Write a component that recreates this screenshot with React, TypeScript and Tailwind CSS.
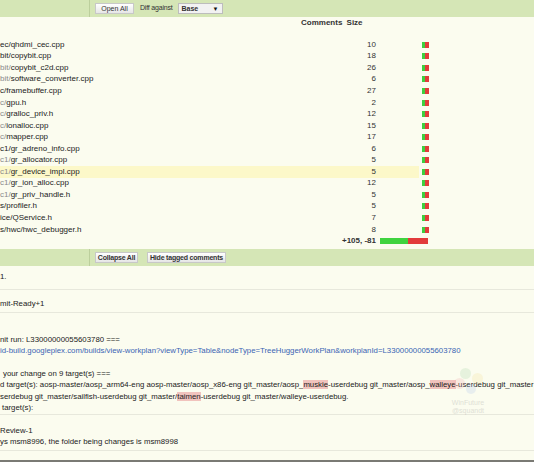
import React from "react";

interface FileRow {
  dim: string;
  name: string;
  count: number;
  highlight?: boolean;
}

const files: FileRow[] = [
  { dim: "", name: "ec/qhdmi_cec.cpp", count: 10 },
  { dim: "", name: "bit/copybit.cpp", count: 18 },
  { dim: "bit/", name: "copybit_c2d.cpp", count: 26 },
  { dim: "bit/", name: "software_converter.cpp", count: 6 },
  { dim: "", name: "c/framebuffer.cpp", count: 27 },
  { dim: "c/", name: "gpu.h", count: 2 },
  { dim: "c/", name: "gralloc_priv.h", count: 12 },
  { dim: "c/", name: "ionalloc.cpp", count: 15 },
  { dim: "c/", name: "mapper.cpp", count: 17 },
  { dim: "", name: "c1/gr_adreno_info.cpp", count: 6 },
  { dim: "c1/", name: "gr_allocator.cpp", count: 5 },
  { dim: "c1/", name: "gr_device_impl.cpp", count: 5, highlight: true },
  { dim: "c1/", name: "gr_ion_alloc.cpp", count: 12 },
  { dim: "c1/", name: "gr_priv_handle.h", count: 5 },
  { dim: "", name: "s/profiler.h", count: 5 },
  { dim: "", name: "ice/QService.h", count: 7 },
  { dim: "", name: "s/hwc/hwc_debugger.h", count: 8 },
];

function Btn({ children, w }: { children: React.ReactNode; w: string }) {
  return (
    <div
      className={`${w} h-[11px] flex items-center justify-center whitespace-nowrap bg-gradient-to-b from-white to-[#e6e6e6] border border-[#c8c8c8] text-[7px] text-[#333] leading-none`}
    >
      {children}
    </div>
  );
}

function Band({ children }: { children: React.ReactNode }) {
  return (
    <div className="h-[17px] bg-[#d5e6b6] flex items-center">
      <div className="w-[90px] h-full border-r border-[#bccf9c]" />
      <div className="flex items-center pl-[5px]">{children}</div>
    </div>
  );
}

function Mark({ children }: { children: React.ReactNode }) {
  return <span className="bg-[#f1c3bd]">{children}</span>;
}

export default function App() {
  return (
    <div
      className="relative w-[534px] h-[462px] overflow-hidden bg-[#fbfcef] text-[8px] text-[#222]"
      style={{ fontFamily: '"Liberation Sans", Arial, sans-serif' }}
    >
      <Band>
        <Btn w="w-[39px]">Open All</Btn>
        <span className="ml-[6px] text-[7px] text-[#333] tracking-[-0.2px]">Diff against</span>
        <div className="ml-[5px] w-[45px] h-[11px] bg-[#f2f2f2] border border-[#bdbdbd] flex items-center justify-between px-[3px] text-[7px] leading-none">
          <span className="font-bold text-[#333]">Base</span>
          <span className="text-[6px] text-[#111]">▼</span>
        </div>
      </Band>

      <div className="h-[22px] flex items-start pt-[1px]">
        <div className="ml-[301px] font-bold text-[#333] text-[8px] leading-[10px]">
          Comments <span className="ml-[2px]">Size</span>
        </div>
      </div>

      <div className="flex flex-col">
        {files.map((f, i) => (
          <div key={i} className="h-[11.56px] flex items-center">
            <div
              className={`w-[419px] h-full flex items-center pr-[43px] ${
                f.highlight ? "bg-[#fcf8c9]" : ""
              }`}
            >
              <div className="flex-1 whitespace-nowrap leading-none">
                {f.dim && <span className="text-[#8a8a8a]">{f.dim}</span>}
                <span>{f.name}</span>
              </div>
              <div className="text-right leading-none text-[#333]">{f.count}</div>
            </div>
            <div className="ml-[3px] flex h-[6px]">
              <div className="w-[3px] bg-[#3fcf3f]" />
              <div className="w-[4px] bg-[#e23b3b]" />
            </div>
          </div>
        ))}
        <div className="h-[11.56px] flex items-center">
          <div className="w-[376px] text-right leading-none font-bold text-[#333]">+105, -81</div>
          <div className="ml-[4px] flex h-[6px]">
            <div className="w-[28px] bg-[#3fd33f]" />
            <div className="w-[20px] bg-[#e23b3b]" />
          </div>
        </div>
      </div>

      <div className="h-[2px]" />

      <Band>
        <Btn w="w-[43px]">
          <span className="font-bold tracking-[-0.2px]">Collapse All</span>
        </Btn>
        <div className="ml-[9px]">
          <Btn w="w-[79px]">
            <span className="font-bold tracking-[-0.2px]">Hide tagged comments</span>
          </Btn>
        </div>
      </Band>

      <div className="text-[7.8px]">
        <div className="h-[24px] flex items-center border-b border-[#e7e8dc] leading-none">1.</div>
        <div className="h-[23px] flex items-end pb-[4px] border-b border-[#e7e8dc] leading-none">
          mit-Ready+1
        </div>

        <div className="pt-[21px] leading-[11.4px] whitespace-nowrap overflow-hidden border-b border-[#e7e8dc]">
          <div>nit run: L33000000055603780 ===</div>
          <div className="text-[#3a64b4]">
            id-build.googleplex.com/builds/view-workplan?viewType=Table&amp;nodeType=TreeHuggerWorkPlan&amp;workplanId=L33000000055603780
          </div>
          <div>&nbsp;</div>
          <div className="pl-[3px]">your change on 9 target(s) ===</div>
          <div>
            d target(s): aosp-master/aosp_arm64-eng aosp-master/aosp_x86-eng git_master/aosp_
            <Mark>muskie</Mark>-userdebug git_master/aosp_<Mark>walleye</Mark>-userdebug git_master
          </div>
          <div>
            serdebug git_master/sailfish-userdebug git_master/<Mark>taimen</Mark>-userdebug
            git_master/walleye-userdebug.
          </div>
          <div className="pl-[2px]">target(s):</div>
        </div>

        <div className="pt-[10px] pb-[2px] leading-[11.4px] whitespace-nowrap border-b border-[#e7e8dc]">
          <div>Review-1</div>
          <div>ys msm8996, the folder being changes is msm8998</div>
        </div>
      </div>

      <div className="h-[9px]" />
      <div className="h-[2px] bg-[#7a7a74]" />
      <div className="h-[10px] bg-[#f3f3ea]" />

      <div className="absolute left-[450px] top-[368px] w-[36px] h-[46px] pointer-events-none opacity-25">
        <div className="absolute left-[10px] top-[0px] w-[11px] h-[11px] rounded-full bg-[#a9d8a9]" />
        <div className="absolute left-[22px] top-[5px] w-[11px] h-[11px] rounded-full bg-[#f5e39a]" />
        <div className="absolute left-[4px] top-[10px] w-[11px] h-[11px] rounded-full bg-[#f2b0b0]" />
        <div className="absolute left-[16px] top-[16px] w-[10px] h-[10px] rounded-full bg-[#b2c8ee]" />
        <div className="absolute left-0 top-[31px] w-full text-center text-[7px] leading-[8px] text-[#8a8a8a]">
          WinFuture
          <br />
          @squandt
        </div>
      </div>
    </div>
  );
}
